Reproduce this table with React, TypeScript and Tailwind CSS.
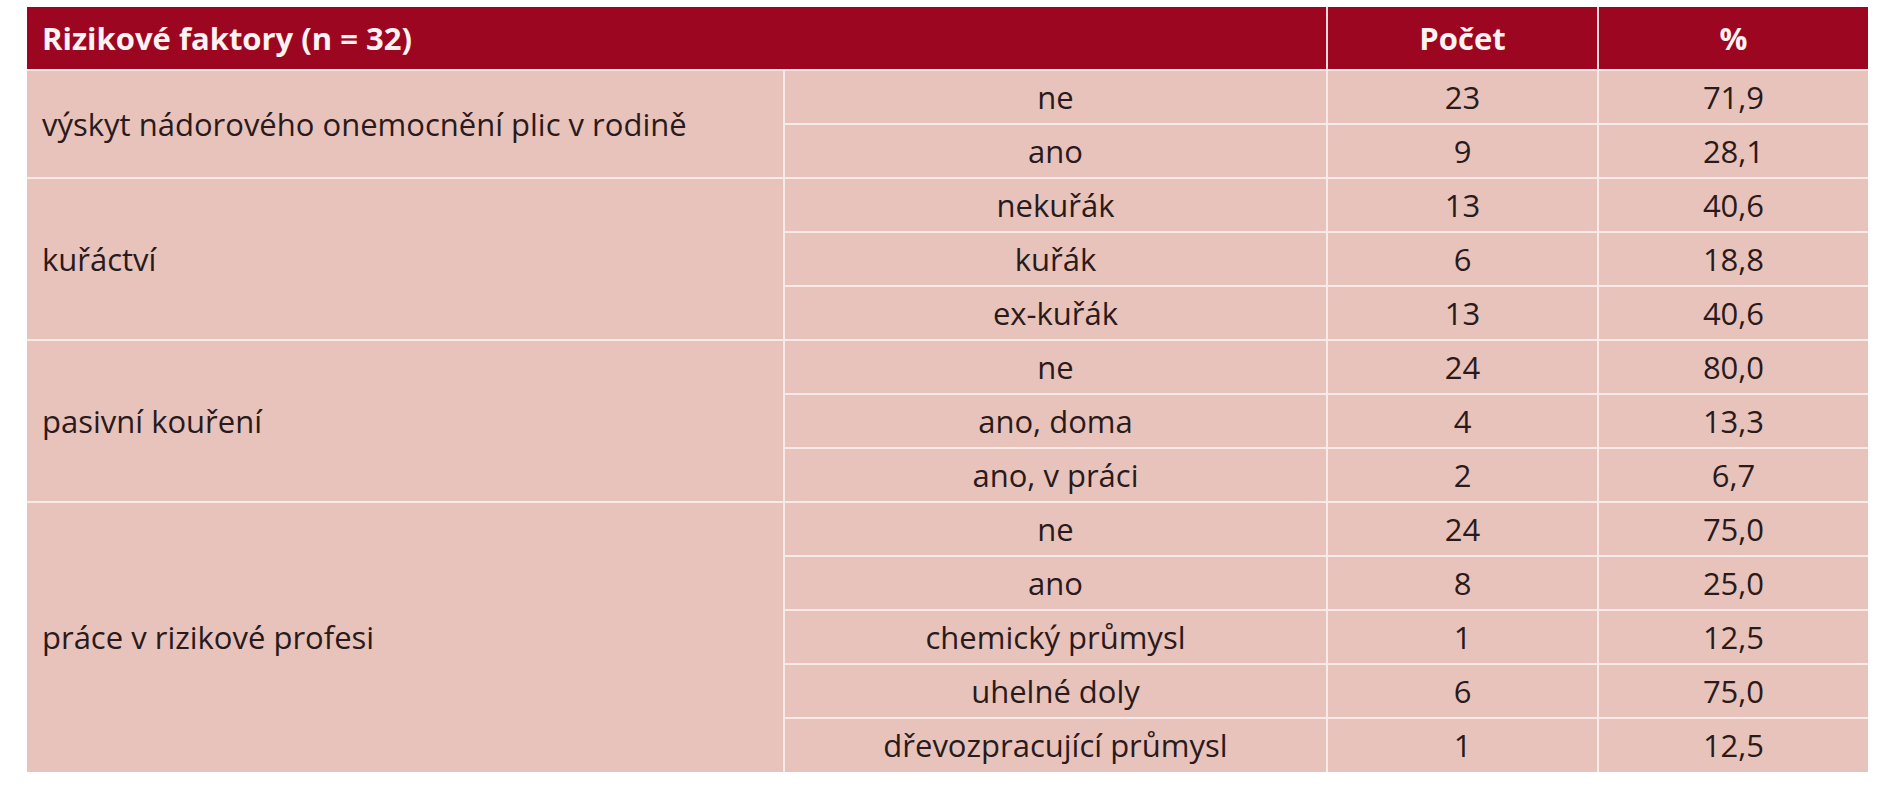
// ── Data ──────────────────────────────────────────────────────────────────────

type Item  = { label: string; count: string; pct: string };
type Group = { factor: string; items: Item[] };

const GROUPS: Group[] = [
  {
    factor: "výskyt nádorového onemocnění plic v rodině",
    items: [
      { label: "ne",  count: "23", pct: "71,9" },
      { label: "ano", count: "9",  pct: "28,1" },
    ],
  },
  {
    factor: "kuřáctví",
    items: [
      { label: "nekuřák",  count: "13", pct: "40,6" },
      { label: "kuřák",    count: "6",  pct: "18,8" },
      { label: "ex-kuřák", count: "13", pct: "40,6" },
    ],
  },
  {
    factor: "pasivní kouření",
    items: [
      { label: "ne",           count: "24", pct: "80,0" },
      { label: "ano, doma",    count: "4",  pct: "13,3" },
      { label: "ano, v práci", count: "2",  pct: "6,7" },
    ],
  },
  {
    factor: "práce v rizikové profesi",
    items: [
      { label: "ne",                     count: "24", pct: "75,0" },
      { label: "ano",                    count: "8",  pct: "25,0" },
      { label: "chemický průmysl",       count: "1",  pct: "12,5" },
      { label: "uhelné doly",            count: "6",  pct: "75,0" },
      { label: "dřevozpracující průmysl", count: "1", pct: "12,5" },
    ],
  },
];

// ── Styles ────────────────────────────────────────────────────────────────────

const cellCls = "border-2 border-[#f6ebe8] h-[54px] p-0 text-center align-middle leading-none";
const headCls = "border-x-2 border-b-2 border-x-[#f1d9d9] border-b-[#f6ebe8] h-[63px] p-0 font-bold leading-none";

// ── App ───────────────────────────────────────────────────────────────────────

export default function App() {
  return (
    <div className="w-[1888px] h-[800px] bg-white pt-[7px] pl-[27px] font-['Open_Sans',sans-serif]">
      <table className="w-[1841px] table-fixed border-collapse border-hidden text-[31px] text-[#2a1a1c]">
        <colgroup>
          <col className="w-[757px]" />
          <col className="w-[543px]" />
          <col className="w-[271px]" />
          <col className="w-[270px]" />
        </colgroup>
        <thead>
          <tr className="bg-[#9d0621] text-[#fdf3f3]">
            <th colSpan={2} className={`${headCls} text-left pl-[15px]`}>
              Rizikové faktory (n = 32)
            </th>
            <th className={`${headCls} text-center`}>Počet</th>
            <th className={`${headCls} text-center`}>%</th>
          </tr>
        </thead>
        <tbody className="bg-[#e8c3bb]">
          {GROUPS.map((g) =>
            g.items.map((it, i) => (
              <tr key={`${g.factor}-${it.label}`}>
                {i === 0 && (
                  <td rowSpan={g.items.length} className={`${cellCls} !text-left pl-[15px]`}>
                    {g.factor}
                  </td>
                )}
                <td className={cellCls}>{it.label}</td>
                <td className={cellCls}>{it.count}</td>
                <td className={cellCls}>{it.pct}</td>
              </tr>
            ))
          )}
        </tbody>
      </table>
    </div>
  );
}
